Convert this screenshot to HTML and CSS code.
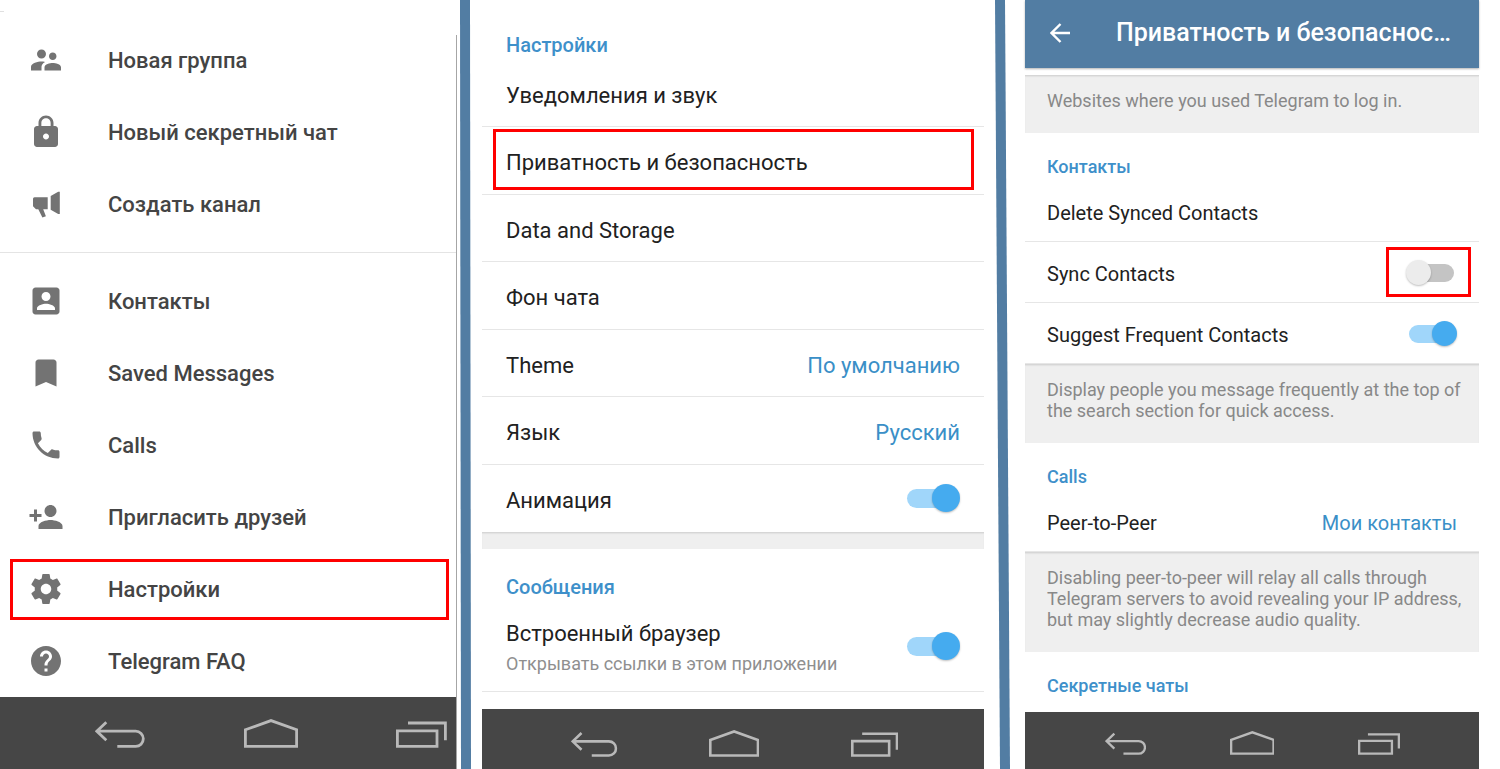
FILE: index.html
```html
<!DOCTYPE html>
<html lang="ru">
	<head>
		<meta charset="utf-8">
		<meta name="viewport" content="width=device-width, initial-scale=1">

		<title>Telegram</title>

		<link rel="stylesheet" href="styles.css">
	</head>
	<body>
		<!-- navigation bar icons -->
		<svg class="sprite" aria-hidden="true">
			<symbol id="nav_back" viewBox="0 0 50 29">
				<path d="M11.3 3.2L1.8 12.2L11.3 21.2M1.8 12.2H40.7A7.6 7.6 0 0 1 40.7 27.4H22.3" />
			</symbol>
			<symbol id="nav_home" viewBox="0 0 54 29">
				<path d="M1.4 10.7L27 1.6L52.6 10.7V27.4H1.4Z" />
			</symbol>
			<symbol id="nav_recent" viewBox="0 0 51 29">
				<path d="M1.4 11.9H41V27.4H1.4ZM12 4H49.4V21.2" />
			</symbol>
		</svg>

		<div class="screens">
			<!-- drawer -->
			<div class="screen drawer">
				<nav class="menu">
					<a class="menu_item" href="#">
						<svg class="icon" viewBox="0 0 24 24"><path d="M16.5 12c1.38 0 2.49-1.12 2.49-2.5S17.88 7 16.5 7C15.12 7 14 8.12 14 9.5s1.12 2.5 2.5 2.5zM9 11c1.66 0 2.99-1.34 2.99-3S10.66 5 9 5C7.34 5 6 6.34 6 8s1.34 3 3 3zm7.5 3c-1.83 0-5.5.92-5.5 2.75V19h11v-2.25c0-1.83-3.67-2.75-5.5-2.75zM9 13c-2.33 0-7 1.17-7 3.5V19h7v-2.25c0-.85.33-2.34 2.37-3.47C10.5 13.1 9.66 13 9 13z" /></svg>
						<span>Новая группа</span>
					</a>
					<a class="menu_item" href="#">
						<svg class="icon" viewBox="0 0 24 24"><path d="M18 8h-1V6c0-2.76-2.24-5-5-5S7 3.240 7 6v2H6c-1.100 0-2 .9-2 2v10c0 1.100.9 2 2 2h12c1.100 0 2-.9 2-2V10c0-1.100-.9-2-2-2zm-6 9c-1.100 0-2-.9-2-2s.9-2 2-2 2 .9 2 2-.9 2-2 2zm3.100-9H8.900V6c0-1.710 1.390-3.100 3.100-3.100s3.100 1.390 3.100 3.100v2z" /></svg>
						<span>Новый секретный чат</span>
					</a>
					<a class="menu_item" href="#">
						<svg class="icon" viewBox="0 0 36 36"><path d="M6.500 11.300H19.700V23.300H15.200L17.900 30.200L14.400 31.600L10.300 23.300H8L5 20.300V12.800Q5 11.300 6.500 11.300ZM22.700 9.900L30.200 5.700H31.800V28H30.200L22.700 23.700Z" /></svg>
						<span>Создать канал</span>
					</a>
					<hr class="menu_line">
					<a class="menu_item" href="#">
						<svg class="icon" viewBox="0 0 24 24"><path d="M3 5v14c0 1.100.89 2 2 2h14c1.100 0 2-.9 2-2V5c0-1.100-.9-2-2-2H5c-1.110 0-2 .9-2 2zm12 4c0 1.660-1.340 3-3 3s-3-1.340-3-3 1.340-3 3-3 3 1.340 3 3zm-9 8c0-2 4-3.100 6-3.100s6 1.100 6 3.100v1H6v-1z" /></svg>
						<span>Контакты</span>
					</a>
					<a class="menu_item" href="#">
						<svg class="icon" viewBox="0 0 24 24"><path d="M17 3H7c-1.100 0-2 .9-2 2v16l7-3 7 3V5c0-1.100-.9-2-2-2z" /></svg>
						<span>Saved Messages</span>
					</a>
					<a class="menu_item" href="#">
						<svg class="icon" viewBox="0 0 24 24"><path d="M6.620 10.790c1.440 2.830 3.760 5.140 6.590 6.590l2.200-2.200c.27-.27.67-.36 1.020-.24 1.120.37 2.330.57 3.570.57.55 0 1 .45 1 1V20c0 .55-.45 1-1 1-9.390 0-17-7.610-17-17 0-.55.45-1 1-1h3.500c.55 0 1 .45 1 1 0 1.250.2 2.450.57 3.570.11.35.03.74-.25 1.020l-2.200 2.200z" /></svg>
						<span>Calls</span>
					</a>
					<a class="menu_item" href="#">
						<svg class="icon" viewBox="0 0 24 24"><path d="M15 12c2.210 0 4-1.790 4-4s-1.790-4-4-4-4 1.790-4 4 1.790 4 4 4zm-9-2V7H4v3H1v2h3v3h2v-3h3v-2H6zm9 4c-2.670 0-8 1.340-8 4v2h16v-2c0-2.660-5.330-4-8-4z" /></svg>
						<span>Пригласить друзей</span>
					</a>
					<a class="menu_item menu_item_marked" href="#">
						<svg class="icon" viewBox="0 0 24 24"><path d="M19.430 12.980c.04-.32.07-.64.07-.98s-.03-.66-.07-.98l2.110-1.650c.19-.15.24-.42.12-.64l-2-3.460c-.12-.22-.39-.3-.61-.22l-2.490 1c-.52-.4-1.080-.73-1.690-.98l-.38-2.650C14.460 2.180 14.250 2 14 2h-4c-.25 0-.46.18-.49.42l-.38 2.650c-.61.25-1.170.59-1.690.98l-2.490-1c-.23-.09-.49 0-.61.22l-2 3.460c-.13.22-.07.49.12.64l2.110 1.650c-.04.32-.07.65-.07.98s.03.66.07.98l-2.110 1.650c-.19.15-.24.42-.12.64l2 3.460c.12.22.39.3.61.22l2.490-1c.52.4 1.080.73 1.690.98l.38 2.650c.03.24.24.42.49.42h4c.25 0 .46-.18.49-.42l.38-2.650c.61-.25 1.170-.59 1.690-.98l2.490 1c.23.09.49 0 .61-.22l2-3.460c.12-.22.07-.49-.12-.64l-2.110-1.650zM12 15.500c-1.930 0-3.500-1.570-3.500-3.500s1.570-3.500 3.500-3.500 3.500 1.570 3.500 3.500-1.570 3.500-3.500 3.500z" /></svg>
						<span>Настройки</span>
					</a>
					<a class="menu_item" href="#">
						<svg class="icon" viewBox="0 0 24 24"><path d="M12 2C6.480 2 2 6.480 2 12s4.480 10 10 10 10-4.480 10-10S17.520 2 12 2zm1 17h-2v-2h2v2zm2.070-7.750l-.9.920C13.450 12.900 13 13.500 13 15h-2v-.5c0-1.100.45-2.100 1.170-2.830l1.240-1.260c.37-.36.59-.86.59-1.410 0-1.100-.9-2-2-2s-2 .9-2 2H8c0-2.210 1.790-4 4-4s4 1.790 4 4c0 .88-.36 1.680-.93 2.250z" /></svg>
						<span>Telegram FAQ</span>
					</a>
				</nav>
				<div class="navbar">
					<button class="nav_button" aria-label="Назад"><svg viewBox="0 0 50 29"><use href="#nav_back" /></svg></button>
					<button class="nav_button" aria-label="Домой"><svg viewBox="0 0 54 29"><use href="#nav_home" /></svg></button>
					<button class="nav_button" aria-label="Недавние"><svg viewBox="0 0 51 29"><use href="#nav_recent" /></svg></button>
				</div>
			</div>

			<div class="stripe stripe_first"></div>

			<!-- settings -->
			<div class="screen settings">
				<h2 class="heading">Настройки</h2>
				<div class="rows">
					<a class="row" href="#">Уведомления и звук</a>
					<a class="row row_marked" href="#">Приватность и безопасность</a>
					<a class="row" href="#">Data and Storage</a>
					<a class="row" href="#">Фон чата</a>
					<a class="row" href="#">Theme <span class="value">По умолчанию</span></a>
					<a class="row" href="#">Язык <span class="value">Русский</span></a>
					<label class="row">Анимация <input class="toggle" type="checkbox" checked></label>
				</div>
				<div class="note note_empty"></div>
				<h2 class="heading">Сообщения</h2>
				<label class="row row_double">
					<span>Встроенный браузер <small class="hint">Открывать ссылки в этом приложении</small></span>
					<input class="toggle" type="checkbox" checked>
				</label>
				<div class="navbar">
					<button class="nav_button" aria-label="Назад"><svg viewBox="0 0 50 29"><use href="#nav_back" /></svg></button>
					<button class="nav_button" aria-label="Домой"><svg viewBox="0 0 54 29"><use href="#nav_home" /></svg></button>
					<button class="nav_button" aria-label="Недавние"><svg viewBox="0 0 51 29"><use href="#nav_recent" /></svg></button>
				</div>
			</div>

			<div class="stripe stripe_second"></div>

			<!-- privacy -->
			<div class="screen privacy">
				<header class="topbar">
					<button class="back" aria-label="Назад"><svg viewBox="0 0 20 20"><path d="M20 10H1.500M10.500 1L1.500 10L10.500 19" /></svg></button>
					<h1 class="topbar_title">Приватность и безопаснос…</h1>
				</header>
				<p class="note">Websites where you used Telegram to log in.</p>
				<h2 class="heading">Контакты</h2>
				<a class="row" href="#">Delete Synced Contacts</a>
				<label class="row">Sync Contacts <span class="toggle_marked"><input class="toggle" type="checkbox"></span></label>
				<label class="row">Suggest Frequent Contacts <input class="toggle" type="checkbox" checked></label>
				<p class="note">Display people you message frequently at the top of the search section for quick access.</p>
				<h2 class="heading">Calls</h2>
				<a class="row" href="#">Peer-to-Peer <span class="value">Мои контакты</span></a>
				<p class="note">Disabling peer-to-peer will relay all calls through Telegram servers to avoid revealing your IP address, but may slightly decrease audio quality.</p>
				<h2 class="heading">Секретные чаты</h2>
				<div class="navbar">
					<button class="nav_button" aria-label="Назад"><svg viewBox="0 0 50 29"><use href="#nav_back" /></svg></button>
					<button class="nav_button" aria-label="Домой"><svg viewBox="0 0 54 29"><use href="#nav_home" /></svg></button>
					<button class="nav_button" aria-label="Недавние"><svg viewBox="0 0 51 29"><use href="#nav_recent" /></svg></button>
				</div>
			</div>
		</div>
	</body>
</html>
```

FILE: styles.css
```css
* {
	margin:0px;
	padding:0px;
	box-sizing:border-box;
}

body {
	background:white;
	color:#212121;
	font-family:Roboto, "Noto Sans", sans-serif;
	font-size:22px;
}

a {
	color:inherit;
	text-decoration:none;
}

button {
	background:none;
	border:0px;
}

.sprite {
	position:absolute;
	width:0px;
	height:0px;
}

.screens {
	display:grid;
	grid-template-columns:457fr 25px 502fr 41px 454fr;
	padding-right:21px;
	min-height:100vh;
}

.screen {
	display:flex;
	flex-direction:column;
	min-width:0px;
}

/* blue stripes between the screens, slightly slanted */
.stripe {
	background:#527da3;
}
.stripe_first {
	margin:0px 11px 0px 3px;
	clip-path:polygon(0px 0px, 10px 0px, 100% 100%, 1px 100%);
}
.stripe_second {
	margin:0px 15px 0px 11px;
	clip-path:polygon(0px 0px, 10px 0px, 100% 100%, 5px 100%);
}

/* android navigation bar */
.navbar {
	display:flex;
	justify-content:space-between;
	align-items:center;
	margin-top:auto;
	background:#464646;
}
	.nav_button {
		display:flex;
	}
	.nav_button svg {
		height:29px;
		fill:none;
		stroke:#b9b9b9;
		stroke-width:2.8;
	}

/* drawer */
.drawer {
	padding-right:1px;
	background:
		linear-gradient(#a6a6a6, #a6a6a6) no-repeat right 0px top 35px / 1px 100%,
		linear-gradient(#e0e0e0, #e0e0e0) no-repeat 0px 11px / 4px 1px;
}
	.menu {
		padding-top:24px;
	}
	.menu_item {
		position:relative;
		display:flex;
		align-items:center;
		gap:44px;
		height:72px;
		padding-left:28px;

		color:#444;
		font-weight:500;
	}
	.menu_line {
		height:1px;
		margin:12px 0px;
		border:0px;
		background:#e4e4e4;
	}
	.icon {
		width:36px;
		height:36px;
		fill:#737373;
	}
	.menu_item_marked::after {
		content:"";
		position:absolute;
		inset:6px 7px 5px 10px;
		border:3px solid red;
	}
	.drawer .navbar {
		height:72px;
		padding:0px 9px 0px 95px;
	}

/* rows of the settings screens */
.heading {
	color:#3e90ca;
	font-weight:500;
}
.row {
	position:relative;
	display:flex;
	justify-content:space-between;
	align-items:center;
	border-bottom:1px solid #e6e6e6;
}
.value {
	color:#3a8fc7;
}
.hint {
	display:block;
	color:#8f8f8f;
}
.note {
	background:#efefef;
	border-top:1px solid #d6d6d6;
	box-shadow:inset 0px 1px 1px #e2e2e2;
	color:#888;
}

.toggle {
	position:relative;
	flex:none;
	appearance:none;
	width:53px;
	height:28px;
}
	.toggle::before {
		content:"";
		position:absolute;
		inset:5px 0px 4px 2px;
		border-radius:10px;
		background:#c4c4c4;
	}
	.toggle::after {
		content:"";
		position:absolute;
		left:0px;
		top:0px;
		height:100%;
		aspect-ratio:1;
		border-radius:50%;
		background:#ececec;
		box-shadow:0px 1px 2px rgba(0,0,0,0.25);
	}
	.toggle:checked::before {
		left:0px;
		right:2px;
		background:#a0d6fa;
	}
	.toggle:checked::after {
		left:auto;
		right:0px;
		background:#45abef;
	}

/* settings */
.settings {
	padding-top:31px;
}
	.settings .heading {
		padding:0px 24px;
		font-size:20px;
		line-height:29px;
	}
	.settings .row {
		height:67px;
		padding:4px 24px 0px;
	}
	.settings .row:nth-child(even) {
		height:68px;
	}
	.settings .row:last-child {
		border-bottom:0px;
	}
	.settings .toggle {
		margin-bottom:5px;
	}
	.row_marked::after {
		content:"";
		position:absolute;
		inset:2px 10px 4px 11px;
		border:3px solid red;
	}
	.note_empty {
		height:17px;
	}
	.note_empty + .heading {
		padding-top:24px;
	}
	.settings .row_double {
		height:90px;
	}
	.hint {
		margin-top:5px;
		font-size:18px;
		line-height:26px;
	}
	.settings .navbar {
		height:60px;
		padding:8px 86px 0px 89px;
	}
	.settings .nav_button svg {
		height:27px;
	}

/* privacy */
.privacy {
	font-size:20px;
}
	.topbar {
		display:flex;
		align-items:center;
		gap:46px;
		height:68px;
		margin-bottom:7px;
		padding:0px 22px 3px 25px;
		background:#527da3;
		box-shadow:0px 1px 2px rgba(0,0,0,0.3);
	}
	.back {
		display:flex;
	}
	.back svg {
		width:20px;
		height:20px;
		fill:none;
		stroke:white;
		stroke-width:2.4;
	}
	.topbar_title {
		color:white;
		font-size:25px;
		font-weight:500;
		white-space:nowrap;
	}
	.privacy .note {
		padding:14px 12px 22px 22px;
		font-size:18px;
		line-height:21px;
	}
	.privacy .heading {
		padding:22px 22px 2px;
		font-size:18px;
		line-height:24px;
	}
	.privacy .row {
		height:61px;
		padding:3px 22px 0px;
	}
	.privacy .toggle {
		width:48px;
		height:25px;
	}
	.privacy .row > .toggle,
	.toggle_marked {
		margin-bottom:3px;
	}
	.privacy .toggle::before {
		top:4px;
		bottom:3px;
	}
	.toggle_marked {
		display:flex;
		padding:10px 14px 9px 17px;
		margin-right:-14px;
		border:3px solid red;
	}
	.privacy .navbar {
		height:57px;
		padding:5px 79px 0px 80px;
	}
	.privacy .nav_button svg {
		height:24px;
	}
```
